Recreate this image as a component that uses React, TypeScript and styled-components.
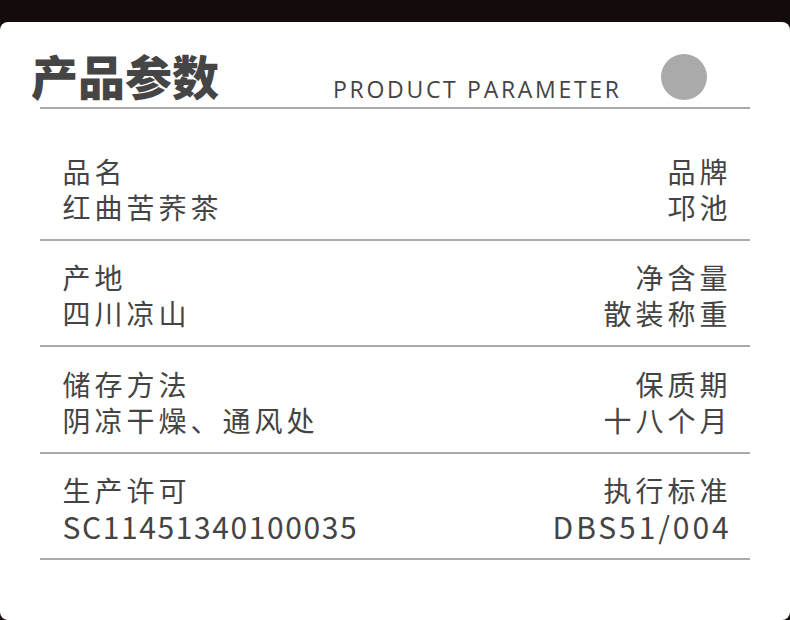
import styled, { createGlobalStyle } from 'styled-components'

const GlobalStyle = createGlobalStyle`
  html, body {
    margin: 0;
    padding: 0;
    background: #140b0b;
  }
  body {
    font-family: "Noto Sans CJK SC", "Noto Sans", sans-serif;
  }
`

type Param = {
  label: string
  value: string
  rlabel: string
  rvalue: string
  latin?: [number, number]
}

// latin: letter-spacing of the left / right value when it is a code
const params: Param[] = [
  { label: '品名', value: '红曲苦荞茶', rlabel: '品牌', rvalue: '邛池' },
  { label: '产地', value: '四川凉山', rlabel: '净含量', rvalue: '散装称重' },
  { label: '储存方法', value: '阴凉干燥、通风处', rlabel: '保质期', rvalue: '十八个月' },
  {
    label: '生产许可',
    value: 'SC11451340100035',
    rlabel: '执行标准',
    rvalue: 'DBS51/004',
    latin: [1.6, 2.9],
  },
]

export default function App() {
  return (
    <>
      <GlobalStyle />
      <Page>
        <Card>
          <Header>
            <Title>产品参数</Title>
            <Subtitle>PRODUCT PARAMETER</Subtitle>
            <Dot />
          </Header>
          <List>
            {params.map((p) => (
              <Row key={p.label}>
                <Cell>
                  <Text>{p.label}</Text>
                  <Text $spacing={p.latin?.[0]}>{p.value}</Text>
                </Cell>
                <Cell $right>
                  <Text>{p.rlabel}</Text>
                  <Text $spacing={p.latin?.[1]}>{p.rvalue}</Text>
                </Cell>
              </Row>
            ))}
          </List>
        </Card>
      </Page>
    </>
  )
}

const Page = styled.div`
  padding-top: 22px;
  height: 620px;
  box-sizing: border-box;
`

const Card = styled.div`
  background: #fff;
  border-radius: 8px;
  height: 598px;
`

/**
 * HEADER
 */
const Header = styled.div`
  margin: 0 40px;
  height: 76px;
  padding-bottom: 9px;
  border-bottom: 2px solid #aaa;
  display: flex;
  align-items: flex-end;
`

const Title = styled.div`
  margin-left: -9px;
  font-family: "Noto Sans CJK SC", sans-serif;
  font-weight: 900;
  font-size: 47px;
  line-height: 1;
  color: #454545;
`

const Subtitle = styled.div`
  margin-left: 114px;
  margin-bottom: -3px;
  font-family: "Open Sans", sans-serif;
  font-size: 23px;
  line-height: 1;
  letter-spacing: 2.7px;
  color: #444;
`

const Dot = styled.div`
  margin-left: 39px;
  margin-bottom: -2px;
  width: 46px;
  height: 46px;
  border-radius: 50%;
  background: #aaa;
`

/**
 * ROWS
 */
const List = styled.div`
  margin: 0 40px;
  padding-top: 25px;
`

const Row = styled.div`
  display: flex;
  justify-content: space-between;
  padding: 18.5px 18.5px 14px 22.5px;
  border-bottom: 2px solid #aaa;
`

const Cell = styled.div<{ $right?: boolean }>`
  display: flex;
  flex-direction: column;
  text-align: ${(p) => (p.$right ? 'right' : 'left')};
`

const Text = styled.div<{ $spacing?: number }>`
  font-size: ${(p) => (p.$spacing !== undefined ? 30 : 28)}px;
  line-height: 36px;
  letter-spacing: ${(p) => p.$spacing ?? 4}px;
  color: #444;
  white-space: nowrap;
`
